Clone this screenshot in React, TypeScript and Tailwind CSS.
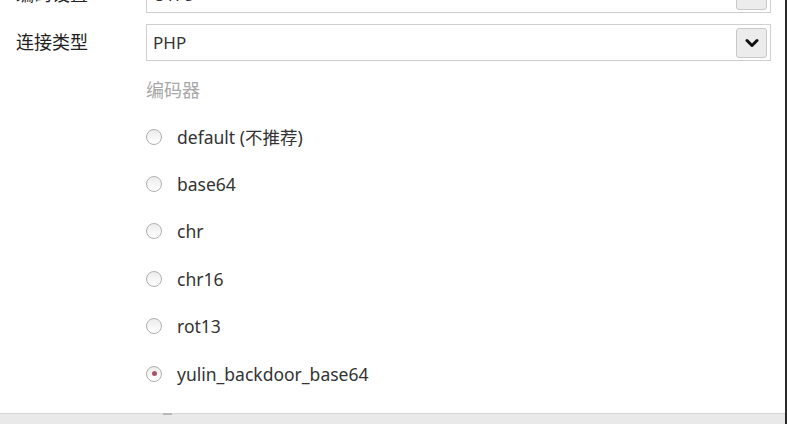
import React from 'react';

const font = { fontFamily: '"Noto Sans", "Noto Sans CJK SC", sans-serif' };

const encoders = [
  { name: 'default (不推荐)', checked: false },
  { name: 'base64', checked: false },
  { name: 'chr', checked: false },
  { name: 'chr16', checked: false },
  { name: 'rot13', checked: false },
  { name: 'yulin_backdoor_base64', checked: true },
];

const Chevron = () => (
  <svg width="14" height="10" viewBox="0 0 14 10">
    <path d="M2 2.5 L7 7.5 L12 2.5" fill="none" stroke="#111" strokeWidth="3" strokeLinecap="round" strokeLinejoin="round" />
  </svg>
);

const SelectRow = ({ label, value }: { label: string; value: string }) => (
  <div className="flex items-center h-[37px]">
    <div className="w-[146px] pl-4 text-[18px] text-[#222]">{label}</div>
    <div className="w-[625px] h-[37px] border border-[#cfcfcf] bg-white flex items-center justify-between pl-[6px] pr-[3px]">
      <span className="text-[17px] text-[#333]">{value}</span>
      <div className="w-[31px] h-[30px] rounded-[3px] border border-[#c8c8c8] bg-[#ececec] flex items-center justify-center">
        <Chevron />
      </div>
    </div>
  </div>
);

const Radio = ({ name, checked }: { name: string; checked: boolean }) => (
  <div className="flex items-center h-[47.4px]">
    <span className="w-[16px] h-[16px] rounded-full border-[1.5px] border-[#b0b0b0] bg-gradient-to-b from-[#ececec] to-white flex items-center justify-center">
      {checked && <span className="w-[5px] h-[5px] rounded-full bg-[#a8546a]" />}
    </span>
    <span className="ml-[15px] text-[17.5px] text-[#333]">{name}</span>
  </div>
);

const App = () => {
  return (
    <div className="relative w-[787px] h-[424px] overflow-hidden bg-white border-r-2 border-[#2a2a2a]" style={font}>
      <div className="-mt-[24px]">
        <SelectRow label="编码设置" value="UTF8" />
        <div className="mt-[11px]">
          <SelectRow label="连接类型" value="PHP" />
        </div>
        <div className="pl-[146px] mt-[17px] text-[18px] text-[#a8a8a8] h-[24px] leading-[24px]">编码器</div>
        <div className="pl-[146px] mt-[11px]">
          {encoders.map((e) => (
            <Radio key={e.name} name={e.name} checked={e.checked} />
          ))}
        </div>
      </div>
      <div className="absolute left-0 right-0 bottom-0 h-[11px] bg-[#e9e9e9] border-t border-[#d6d6d6]">
        <div className="absolute left-[163px] -top-[1px] w-[9px] h-[2px] bg-[#b8b8b8]" />
      </div>
    </div>
  );
};

export default App;
